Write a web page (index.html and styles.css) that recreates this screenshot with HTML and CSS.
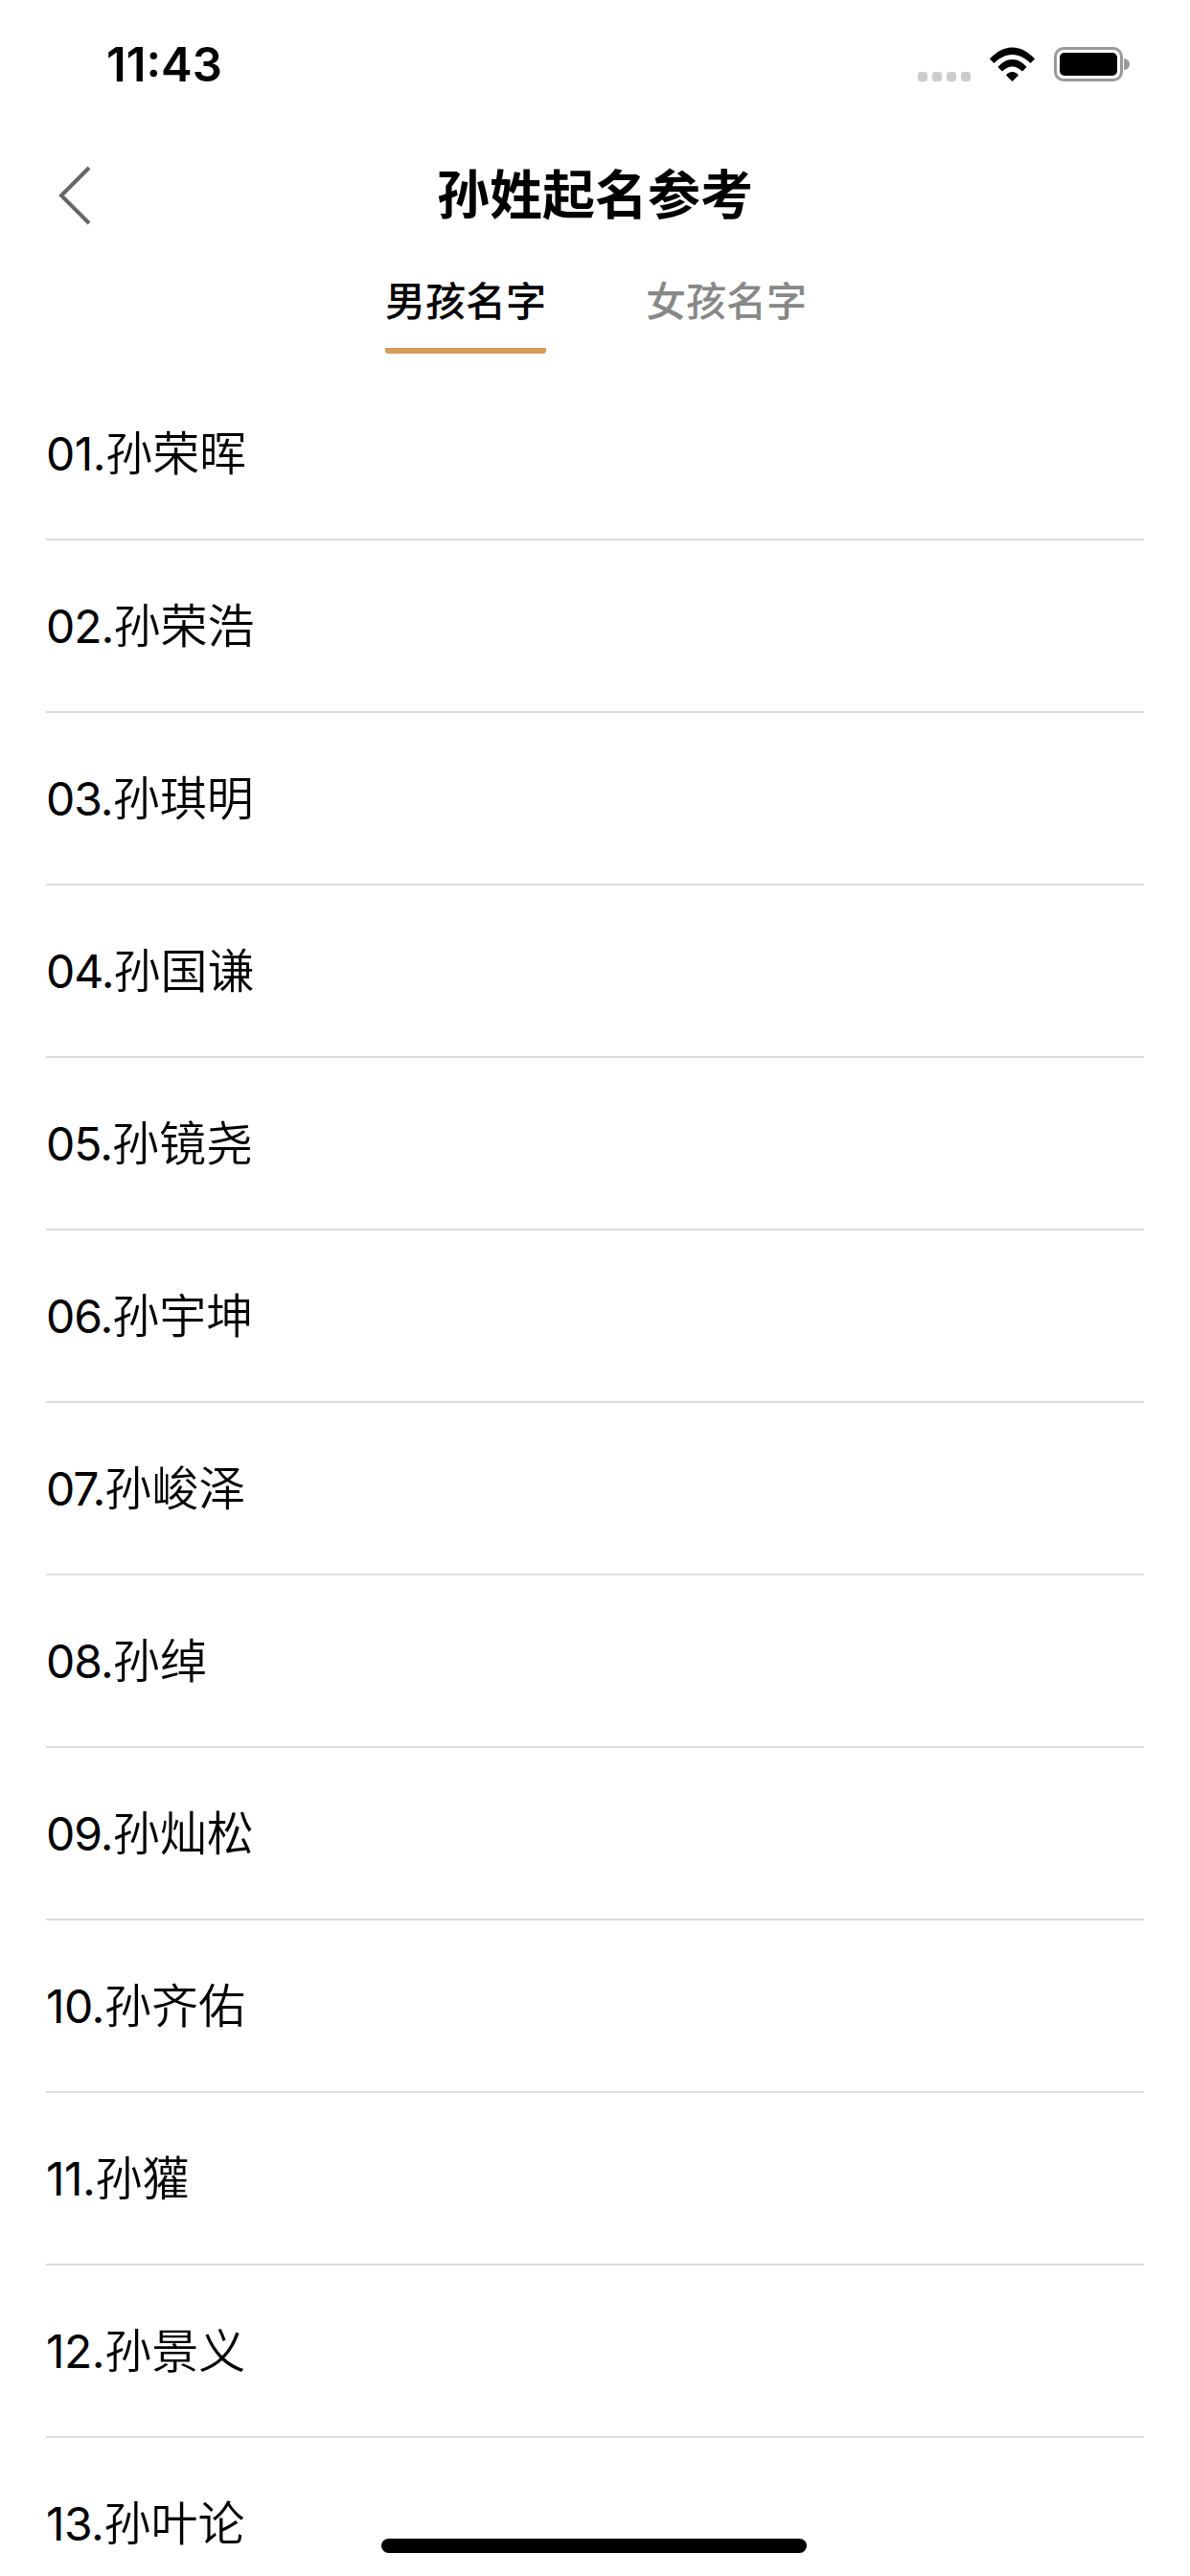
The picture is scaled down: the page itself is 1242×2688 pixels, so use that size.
FILE: index.html
```html
<!DOCTYPE html>
<html lang="zh-CN">
<head>
    <meta charset="UTF-8">
    <meta name="viewport" content="width=device-width, initial-scale=1.0">
    <title>孙姓起名参考</title>
    <link rel="stylesheet" href="styles.css">
</head>
<body>
    <div class="status-bar">
        <span class="time">11:43</span>
        <div class="status-icons">
            <div class="signal"><i></i><i></i><i></i><i></i></div>
            <svg class="wifi" width="47" height="36" viewBox="0 0 47 36">
                <path d="M0 12.5C6 6 14 0.5 23.5 0.5S41 6 47 12.5L42.5 17C37.5 12 31 8 23.5 8S9.5 12 4.500 17Z"/>
                <path d="M8.500 21C12.500 16.500 17.500 13 23.500 13S34.500 16.500 38.500 21L34 25.500C31 22.500 27.500 20.500 23.500 20.500S16 22.500 13 25.500Z"/>
                <path d="M17 29.500C18.500 27.500 21 26 23.500 26S28.500 27.500 30 29.500L23.500 36Z"/>
            </svg>
            <div class="battery"><div class="battery-level"></div></div>
            <div class="battery-cap"></div>
        </div>
    </div>

    <div class="nav-bar">
        <svg class="back-icon" width="36" height="66" viewBox="0 0 36 66">
            <path d="M33 4L4 33L33 62" fill="none" stroke="#666" stroke-width="4"/>
        </svg>
        <h1>孙姓起名参考</h1>
    </div>

    <div class="tabs">
        <div class="tab active">男孩名字</div>
        <div class="tab">女孩名字</div>
    </div>

    <ul class="name-list">
        <li><span class="num wide">01.</span>孙荣晖</li>
        <li><span class="num">02.</span>孙荣浩</li>
        <li><span class="num">03.</span>孙琪明</li>
        <li><span class="num">04.</span>孙国谦</li>
        <li><span class="num">05.</span>孙镜尧</li>
        <li><span class="num">06.</span>孙宇坤</li>
        <li><span class="num">07.</span>孙峻泽</li>
        <li><span class="num">08.</span>孙绰</li>
        <li><span class="num">09.</span>孙灿松</li>
        <li><span class="num wide">10.</span>孙齐佑</li>
        <li><span class="num wide">11.</span>孙獾</li>
        <li><span class="num wide">12.</span>孙景义</li>
        <li><span class="num wide">13.</span>孙叶论</li>
    </ul>

    <div class="home-bar"></div>
</body>
</html>
```

FILE: styles.css
```css
/* General Styles */
html, body {
    height: 2688px;
    overflow: hidden;
}

body {
    font-family: Inter, "Noto Sans CJK SC", sans-serif;
    background-color: #fff;
    color: #000;
    margin: 0;
    position: relative;
}

/* Status Bar */
.status-bar {
    height: 132px;
    display: flex;
    justify-content: space-between;
    align-items: flex-start;
    padding: 0 63px 0 111px;
    box-sizing: border-box;
}

.time {
    font-size: 49px;
    font-weight: 600;
    line-height: 58px;
    margin-top: 39px;
}

.status-icons {
    display: flex;
    align-items: flex-start;
    margin-top: 49px;
}

.signal {
    display: flex;
    gap: 5px;
    margin-top: 26px;
    margin-right: 20px;
}

.signal i {
    width: 10px;
    height: 10px;
    border-radius: 3px;
    background-color: #ccc;
}

.wifi {
    margin-right: 20px;
}

.battery {
    width: 72px;
    height: 36px;
    box-sizing: border-box;
    border: 3px solid #999;
    border-radius: 10px;
    padding: 3px;
}

.battery-level {
    height: 100%;
    background-color: #000;
    border-radius: 5px;
}

.battery-cap {
    width: 6px;
    height: 12px;
    margin-top: 12px;
    margin-left: 1px;
    background-color: #999;
    border-radius: 0 6px 6px 0;
}

/* Nav Bar */
.nav-bar {
    height: 106px;
    display: flex;
    align-items: center;
    justify-content: center;
    position: relative;
}

.nav-bar h1 {
    margin: 28px 0 0;
    font-size: 55px;
    font-weight: 700;
}

.back-icon {
    position: absolute;
    left: 60px;
    top: 39px;
}

/* Tabs */
.tabs {
    height: 146px;
    display: flex;
    justify-content: center;
    gap: 104px;
    padding-left: 2px;
}

.tab {
    width: 168px;
    height: 131px;
    box-sizing: border-box;
    padding-top: 46px;
    font-size: 42px;
    font-weight: 500;
    line-height: 62px;
    text-align: center;
    white-space: nowrap;
    color: #888;
}

.tab.active {
    color: #000;
    border-bottom: 6px solid #d69a5c;
    border-radius: 0 0 3px 3px;
}

/* Name List */
.name-list {
    list-style: none;
    margin: 0 48px;
    padding: 0;
}

.name-list li {
    height: 180px;
    box-sizing: border-box;
    border-bottom: 2px solid #ddd;
    font-size: 49px;
    font-weight: 350;
    line-height: 180px;
}

.num {
    font-size: 48px;
    font-weight: 380;
    letter-spacing: -1px;
}

/* the 1 is wider in the reference font */
.num.wide {
    letter-spacing: -0.5px;
}

/* Home Indicator */
.home-bar {
    position: absolute;
    left: 398px;
    top: 2649px;
    width: 444px;
    height: 15px;
    background-color: #000;
    border-radius: 8px;
}
```
